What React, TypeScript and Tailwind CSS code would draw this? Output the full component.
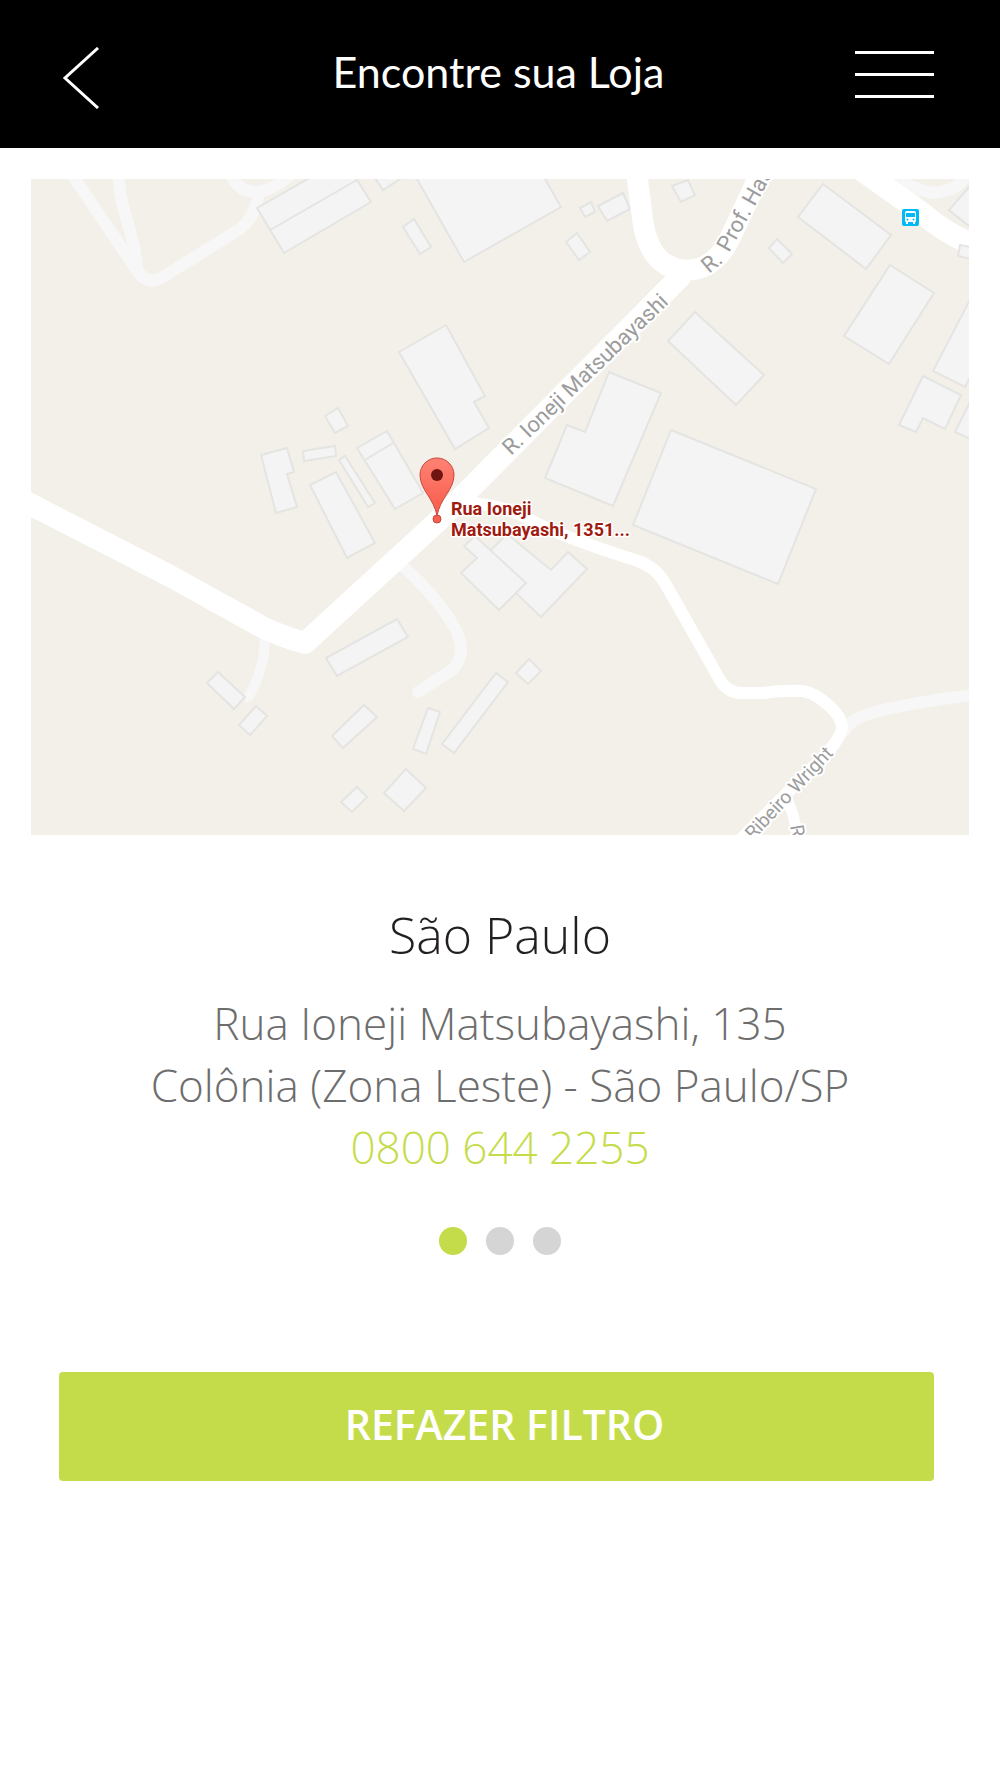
import React, { useState } from 'react';

interface Store {
  city: string;
  address: string;
  district: string;
  phone: string;
}

const stores: Store[] = [
  {
    city: 'São Paulo',
    address: 'Rua Ioneji Matsubayashi, 135',
    district: 'Colônia (Zona Leste) - São Paulo/SP',
    phone: '0800 644 2255',
  },
  {
    city: 'São Paulo',
    address: 'Rua Ioneji Matsubayashi, 135',
    district: 'Colônia (Zona Leste) - São Paulo/SP',
    phone: '0800 644 2255',
  },
  {
    city: 'São Paulo',
    address: 'Rua Ioneji Matsubayashi, 135',
    district: 'Colônia (Zona Leste) - São Paulo/SP',
    phone: '0800 644 2255',
  },
];

const buildings = [
  '257,208 320,172 352,172 371,202 284,253',
  '373,175 383,190 403,177',
  '413,172 464,262 561,207 541,172',
  '403,227 414,219 431,247 420,254',
  '580,208 591,202 595,212 585,217',
  '598,206 623,193 630,209 607,221',
  '566,242 577,233 590,252 579,260',
  '399,352 446,325 485,396 474,402 489,428 455,449',
  '357,448 387,431 423,493 395,509',
  '339,460 345,456 375,503 368,507',
  '325,416 338,408 348,426 335,433',
  '303,451 335,446 336,456 304,461',
  '261,455 287,448 294,472 287,474 297,507 276,513',
  '310,485 336,472 375,543 347,558',
  '609,372 661,393 613,506 545,478 567,425 585,432',
  '695,312 764,375 736,405 668,341',
  '823,184 891,235 866,269 798,217',
  '890,265 934,293 889,364 844,336',
  '777,239 792,254 783,263 769,248',
  '672,186 688,180 695,195 681,202',
  '671,430 816,489 778,584 633,525',
  '975,290 933,371 965,387 975,368',
  '923,376 961,395 945,429 923,418 916,432 899,425',
  '975,392 955,432 975,441',
  '975,180 949,210 975,231',
  '218,672 245,697 234,709 207,683',
  '256,706 267,716 250,735 239,725',
  '326,658 397,619 408,637 337,676',
  '332,736 364,705 377,717 343,748',
  '428,708 440,712 426,754 413,749',
  '496,673 508,682 454,753 442,744',
  '529,659 541,671 528,684 516,673',
  '406,769 426,788 404,811 384,793',
  '357,787 367,797 352,812 341,802',
  '491,550 507,534 551,570 568,552 587,569 541,617 516,593',
  '464,546 477,558 461,573 499,610 526,583 475,536',
];

function StoreMap() {
  return (
    <svg viewBox="31 179 938 656" className="block w-full" role="img" aria-label="Mapa da loja">
      <defs>
        <linearGradient id="pin" x1="0" y1="0" x2="0" y2="1">
          <stop offset="0" stopColor="#ff8274" />
          <stop offset="1" stopColor="#f85a4a" />
        </linearGradient>
      </defs>
      <rect x="31" y="179" width="938" height="656" fill="#f3f0e9" />

      {/* Minor roads */}
      <g fill="none" stroke="#f7f7f7" strokeWidth="12" strokeLinecap="round" strokeLinejoin="round">
        <path d="M71 173L136 269Q147 287 163 277L240 229Q254 218 258 198" />
        <path d="M118 173Q120 200 128 224Q136 252 137 268" />
        <path d="M230 173Q238 192 256 192Q270 192 292 174" />
        <path d="M890 172Q910 190 935 193Q958 191 967 174" />
        <path d="M405 568Q440 600 457 632Q467 656 452 670L418 692" />
        <path d="M265 640Q264 672 248 697" strokeWidth="10" />
        <path d="M845 730Q851 717 883 710Q920 701 975 695" />
      </g>

      {/* Buildings */}
      <g fill="#f4f4f4" stroke="#e4e4e2" strokeWidth="2">
        {buildings.map((points) => (
          <polygon key={points} points={points} />
        ))}
        <path d="M270 230L357 180M365 460L393 443" />
      </g>

      {/* Main roads */}
      <g fill="none" stroke="#ffffff" strokeLinecap="round" strokeLinejoin="round">
        <path d="M20 499L170 576L262 627Q280 636 305 643L437 522L680 277" strokeWidth="22" />
        <path d="M636 168L643 222C648 256 665 270 688 270C708 270 722 256 731 236L762 170" strokeWidth="21" />
        <path d="M860 169L922 213Q948 236 980 247" strokeWidth="22" />
        <path
          d="M450 503Q500 500 540 525Q575 541 635 560Q655 566 665 583L720 680Q727 692 740 693L763 693Q783 690 803 691C820 694 842 715 842 727C842 734 834 745 826 754L740 840"
          strokeWidth="12"
        />
        <path d="M787 800Q794 812 798 840" strokeWidth="11" />
      </g>
      <polygon points="960,245 975,248 975,260 958,256" fill="#f4f4f4" stroke="#e4e4e2" strokeWidth="2" />

      {/* Street names */}
      <g
        className="font-['Roboto',sans-serif]"
        fill="#9c9c9c"
        stroke="#ffffff"
        strokeWidth="4"
        strokeLinejoin="round"
        paintOrder="stroke"
      >
        <text transform="translate(511 456) rotate(-44)" fontSize="22">
          R. Ioneji Matsubayashi
        </text>
        <text transform="translate(709 274) rotate(-40)" fontSize="22">
          R.
        </text>
        <text transform="translate(729 253) rotate(-61)" fontSize="22">
          Prof. Has
        </text>
        <text transform="translate(834 754) rotate(-47)" fontSize="19" textAnchor="end">
          Ribeiro Wright
        </text>
        <text transform="translate(790 826) rotate(80)" fontSize="19">
          R
        </text>
      </g>

      {/* Bus stop */}
      <rect x="902" y="209" width="17" height="17" rx="2" fill="#00b9f5" />
      <path
        d="M907 211h7a2 2 0 0 1 2 2v8a1 1 0 0 1-1 1v2h-2v-2h-5v2h-2v-2a1 1 0 0 1-1-1v-8a2 2 0 0 1 2-2z"
        fill="#ffffff"
      />
      <rect x="906" y="213" width="9" height="4" fill="#00b9f5" />
      <circle cx="907.5" cy="219.5" r="1" fill="#00b9f5" />
      <circle cx="913.5" cy="219.5" r="1" fill="#00b9f5" />

      {/* Pin */}
      <path
        d="M437 516C434 498 420 490 420 475A17 17 0 0 1 454 475C454 490 440 498 437 516Z"
        fill="url(#pin)"
        stroke="#c9463c"
        strokeWidth="1"
      />
      <circle cx="437" cy="475" r="6" fill="#6f1410" />
      <circle cx="437" cy="519" r="4" fill="#f8604f" stroke="#c9463c" strokeWidth="1" />

      <g
        className="font-['Roboto',sans-serif] font-bold"
        fontSize="18"
        fill="#a01a10"
        stroke="#ffffff"
        strokeWidth="3"
        strokeLinejoin="round"
        paintOrder="stroke"
      >
        <text x="451" y="515">Rua Ioneji</text>
        <text x="451" y="536">Matsubayashi, 1351...</text>
      </g>
    </svg>
  );
}

export default function App() {
  const [current, setCurrent] = useState(0);
  const store = stores[current];

  return (
    <div className="min-h-screen bg-white font-['Open_Sans',sans-serif]">
      {/* Header */}
      <header className="flex h-[148px] items-center justify-between bg-black pr-[66px] pl-[62px] text-white">
        <button aria-label="Voltar" className="w-20 pt-2">
          <svg viewBox="0 0 38 62" className="w-[38px]" fill="none" stroke="currentColor" strokeWidth="3">
            <path d="M36 1L3 31L36 61" />
          </svg>
        </button>
        <h1 className="pb-1 font-['Lato',sans-serif] text-[43px] leading-[60px]">Encontre sua Loja</h1>
        <button aria-label="Menu" className="flex w-[79px] flex-col gap-[19px]">
          <span className="h-[3px] w-full bg-white" />
          <span className="h-[3px] w-full bg-white" />
          <span className="h-[3px] w-full bg-white" />
        </button>
      </header>

      <main>
        <div className="px-[31px] pt-[31px]">
          <StoreMap />
        </div>

        {/* Store info */}
        <section className="pt-[66px] text-center font-light">
          <h2 className="text-[50px] leading-[68px] text-[#231f20]">{store.city}</h2>
          <address className="pt-[23px] text-[44px] leading-[62px] text-[#6d6d6d] not-italic">
            <p>{store.address}</p>
            <p>{store.district}</p>
            <a href="tel:08006442255" className="text-[#c5dc4a]">
              {store.phone}
            </a>
          </address>
        </section>

        {/* Carousel dots */}
        <div className="flex justify-center gap-[19px] pt-[49px]">
          {stores.map((_, i) => (
            <button
              key={i}
              aria-label={`Loja ${i + 1}`}
              onClick={() => setCurrent(i)}
              className={`h-7 w-7 rounded-full ${i === current ? 'bg-[#c5dc4a]' : 'bg-[#d5d5d5]'}`}
            />
          ))}
        </div>

        <div className="pt-[117px] pr-[66px] pl-[59px]">
          <button className="h-[109px] w-full rounded bg-[#c5dc4a] pb-1 pl-4 text-[41px] font-semibold text-white">
            REFAZER FILTRO
          </button>
        </div>
      </main>
    </div>
  );
}
